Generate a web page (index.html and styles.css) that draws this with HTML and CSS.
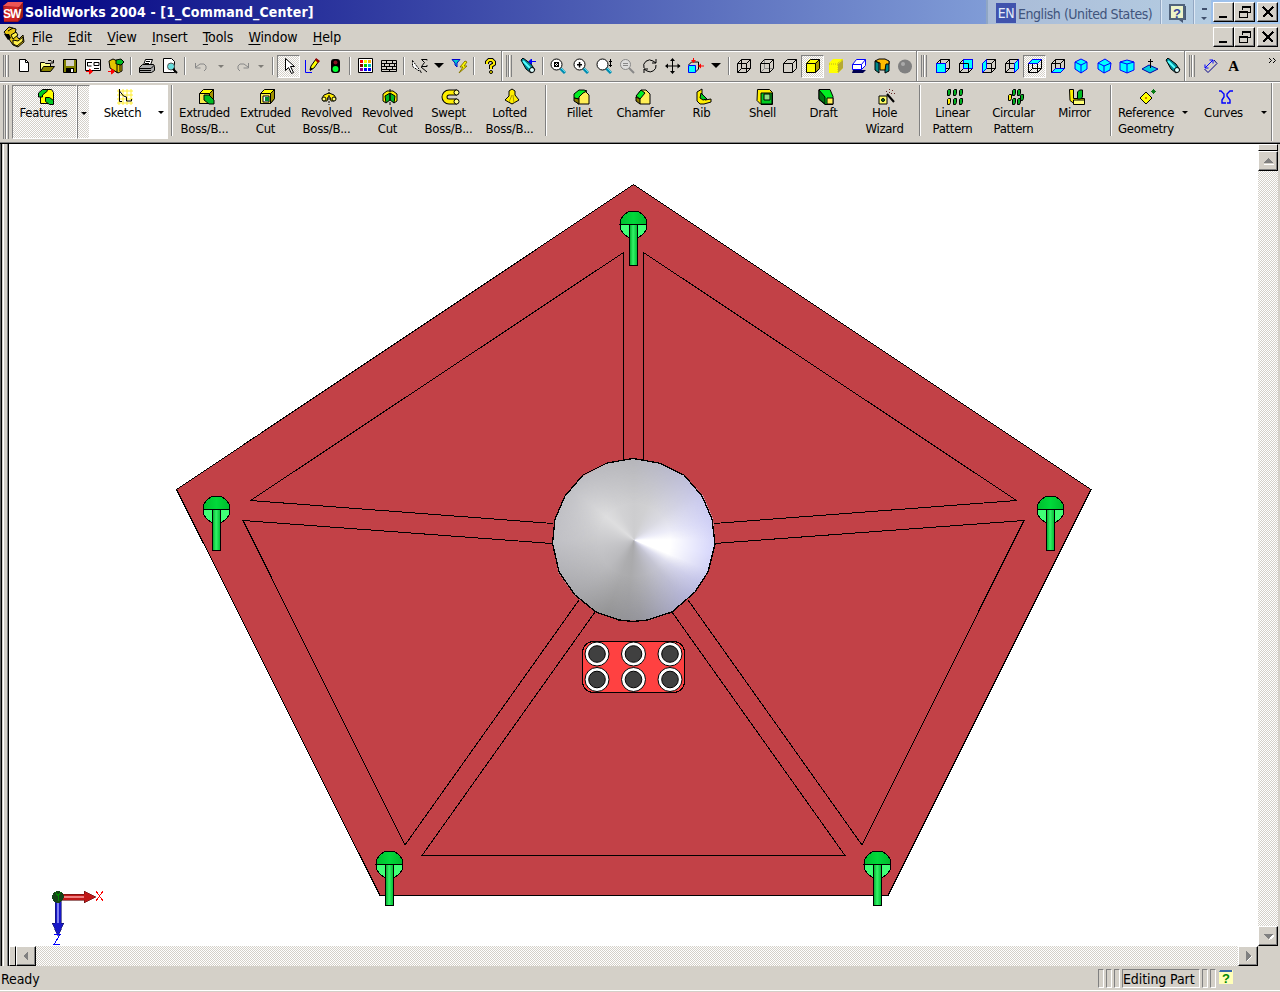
FILE: index.html
```html
<!DOCTYPE html>
<html lang="en">
<head>
<meta charset="utf-8">
<title>SolidWorks 2004 - [1_Command_Center]</title>
<link rel="stylesheet" href="styles.css">
</head>
<body>
<svg class="defs" width="0" height="0">
<defs>
<linearGradient id="domeg" x1="0" x2="1"><stop offset="0" stop-color="#00bd2e"/><stop offset=".5" stop-color="#00d93a"/><stop offset="1" stop-color="#00b82c"/></linearGradient>
<linearGradient id="stemg" x1="0" x2="1"><stop offset="0" stop-color="#00a828"/><stop offset=".45" stop-color="#32f468"/><stop offset="1" stop-color="#00b830"/></linearGradient>
<symbol id="cubewire" viewBox="0 0 16 16"><path class="ln" d="M1.500 5.500h9v9h-9zM5.500 1.500h9v9h-9zM1.500 5.500l4-4M10.500 5.500l4-4M10.500 14.500l4-4M1.500 14.500l4-4"/></symbol>
<symbol id="cubeout" viewBox="0 0 16 16"><path class="ln" d="M1.500 5.500h9v9h-9zM1.500 5.500l4-4h9v9l-4 4M10.500 5.500l4-4"/></symbol>
<symbol id="mag" viewBox="0 0 16 16"><path d="M10 10l5 5" stroke="#008bb0" stroke-width="3"/><path d="M11 10l4 4" stroke="#5de" /><circle cx="6.500" cy="6.500" r="5.500" fill="#fff" stroke="#000"/></symbol>
<symbol id="box" viewBox="0 0 16 16"><path class="ol" fill="#ff0" d="M.5 4.500l4-4h10v9l-4 5H.5z"/><path class="ol" fill="#f5ea4a" d="M.5 4.500h10v10H.5z"/><path d="M10.500 4.500l4-4v9l-4 5z" class="ol" fill="#a09000"/></symbol>
<symbol id="iso" viewBox="0 0 16 16"><path d="M8 1l6 3v7l-6 4-6-4V4z" fill="#0ff" stroke="#00f"/><path d="M2 4l6 3 6-3M8 7v8" fill="none" stroke="#00f"/></symbol>
<symbol id="drop" viewBox="0 0 16 16"><path d="M5 7h6L8 10z"/></symbol>
<symbol id="dropbig" viewBox="0 0 16 16"><path d="M3 5h10L8 10z"/></symbol>
<symbol id="pin" viewBox="0 0 30 58"><circle cx="15" cy="14.500" r="13.500" fill="#40ff76"/><path d="M1.500 14.500a13.500 13.500 0 0 1 27 0z" fill="url(#domeg)"/><circle cx="15" cy="14.500" r="13.500" class="ln"/><path d="M1.500 14.500h27" class="ln"/><rect x="11" y="14.500" width="8" height="41" fill="url(#stemg)" stroke="#000"/></symbol>
<symbol id="lamp" viewBox="0 0 26 26"><circle cx="13" cy="13" r="12" fill="#fff" stroke="#000"/><circle cx="13" cy="13" r="8.300" fill="#404040" stroke="#000"/></symbol>
<symbol id="flash" viewBox="0 0 16 16"><path d="M1 2l2-2 8 6 4 6-4 3-5-4z" class="ol" fill="#008b9a"/><path d="M3 3l7 7" stroke="#5ff" stroke-width="2"/><circle cx="12" cy="12" r="2.500" fill="#dff" stroke="#000"/></symbol>
</defs>
</svg>

<header class="titlebar">
  <svg class="app" viewBox="0 0 20 20"><path d="M0 4l5-4h15v15l-5 5H1z" fill="#9d1b1b"/><path d="M1 5h14v14H1z" fill="#c22"/><path d="M0 4l5-4h15l-4 5z" fill="#e55"/><text x="0" y="16" class="logo">SW</text></svg>
  <h1>SolidWorks 2004 - [1_Command_Center]</h1>
  <div class="lang"><b>EN</b><span>English (United States)</span><i></i>
    <svg class="help" viewBox="0 0 20 20"><path d="M3 2h15v14h-3v3l-4-3H3z" fill="#475875"/><path d="M2 1h14v14H2z" fill="#edf3c8" stroke="#50627b" stroke-width="2"/><text x="5" y="14" class="qb">?</text></svg><i></i>
    <svg class="mini" viewBox="0 0 8 20"><path d="M2 6h5v2H2zM1 15h6l-3 3z" fill="#40506c"/></svg></div>
  <div class="wins">
    <button><svg viewBox="0 0 16 16"><path d="M3 12h8v2H3z"/></svg></button><button><svg viewBox="0 0 16 16"><path class="ln" d="M5.500 5.500v-3h8v6h-3M2.500 7.500h8v6h-8z"/><path d="M5 2h9v2H5zM2 7h9v2H2z"/></svg></button><button class="x"><svg viewBox="0 0 16 16"><path d="M3 3l10 10M13 3L3 13" stroke="#000" stroke-width="2"/></svg></button>
  </div>
</header>

<nav class="menubar">
  <svg class="part" viewBox="0 0 22 22"><path class="ol" fill="#e6c413" d="M1 6l5-5 7 2-1 5 4 5 4-4 1 7-6 5-5-2-4-6z"/><path class="ol" fill="#fff04a" d="M5 5l5-3M8 9l5-3 2 3-5 4zM10 14l5 1 5-4v4l-6 5-4-2z"/><path d="M1 8l4 6 3-2-2-4z"/></svg>
  <a><u>F</u>ile</a><a><u>E</u>dit</a><a><u>V</u>iew</a><a><u>I</u>nsert</a><a><u>T</u>ools</a><a><u>W</u>indow</a><a><u>H</u>elp</a>
  <div class="wins">
    <button><svg viewBox="0 0 16 16"><path d="M3 12h8v2H3z"/></svg></button><button><svg viewBox="0 0 16 16"><path class="ln" d="M5.500 5.500v-3h8v6h-3M2.500 7.500h8v6h-8z"/><path d="M5 2h9v2H5zM2 7h9v2H2z"/></svg></button><button class="x"><svg viewBox="0 0 16 16"><path d="M3 3l10 10M13 3L3 13" stroke="#000" stroke-width="2"/></svg></button>
  </div>
</nav>

<div class="tools">
  <span class="grip"></span>
  <span class="t"><svg viewBox="0 0 16 16"><path class="ol" fill="#fff" d="M3.500 1.500h6l3 3v9h-9z"/><path class="ln" d="M9.500 1.500v3h3"/></svg></span>
  <span class="t"><svg viewBox="0 0 16 16"><path class="ol" fill="#ff8" d="M1.500 13.500v-9h4l1 1h5v3"/><path class="ol" fill="#8b8400" d="M1.500 13.500l3-5h11l-4 5z"/><path class="ln" d="M9 2.500h3l2 2M14.500 2v3h-3"/></svg></span>
  <span class="t"><svg viewBox="0 0 16 16"><path class="ol" fill="#808000" d="M1.500 1.500h13v13h-13z"/><path d="M4 2h8v6H4z" fill="#d4d0c8"/><path d="M4 10h8v5H4z"/><path d="M9 11h2v3H9z" fill="#fff"/></svg></span>
  <span class="t"><svg viewBox="0 0 16 16"><path class="ol" fill="#fff" d="M.5 1.500h15v11H.5z"/><path class="ln" d="M2 4.500h5M2.500 4v4h4M9 4.500h5v3H9zM9 10.500h5"/><path d="M1 13.500h5M4.500 11v5l3-2.500z" fill="red" stroke="red"/></svg></span>
  <span class="t"><svg viewBox="0 0 16 16"><path class="ol" fill="#e4c500" d="M1 3l4-2 9 4v8l-4 2-8-5z"/><path class="ol" fill="#0b2" d="M8 2l5-1 3 3-3 3-5-1z"/><path class="ln" d="M9 7v8M12 7v6"/><path d="M0 13.500h5M3.500 11v5l3-2.500z" fill="red" stroke="red"/></svg></span>
  <i class="sep"></i>
  <span class="t"><svg viewBox="0 0 16 16"><path class="ol" fill="#fff" d="M4.500 7l2-5.500h7L11.500 7z"/><path class="ol" fill="#aaa" d="M.5 9.500l3-3h11l1 2v4l-3 2H.5z"/><path class="ln" d="M1 10.500h11l3-3M1 12.500h11M7 3.500h4M6 5.500h4"/></svg></span>
  <span class="t"><svg viewBox="0 0 16 16"><path class="ol" fill="#fff" d="M1.500.5h8l3 3v11h-11z"/><circle cx="9" cy="8.500" r="3.500" fill="#6dd" stroke="#555"/><path d="M11 11l4 4" stroke="#000" stroke-width="2"/></svg></span>
  <i class="sep"></i>
  <span class="t"><svg viewBox="0 0 16 16"><path fill="none" stroke="#888" d="M2.500 5v5h5M3 9l4-3h4l2 2v3l-2 2"/></svg></span>
  <span class="t w18 dim"><svg><use href="#drop"/></svg></span>
  <span class="t"><svg viewBox="0 0 16 16"><path fill="none" stroke="#888" d="M14.500 5v5h-5M14 9l-4-3H6L4 8v3l2 2"/></svg></span>
  <span class="t w16 dim"><svg><use href="#drop"/></svg></span>
  <i class="sep"></i>
  <span class="t on"><svg viewBox="0 0 16 16"><path class="ol" fill="#fff" d="M4.500.5v12l3-3 3 6 2-1-3-6h4z"/></svg></span>
  <span class="t"><svg viewBox="0 0 16 16"><path d="M1.500 2v12.500H8" fill="none" stroke="#00f"/><path class="ol" fill="#ff0" d="M6 12l1-4 5-7 3 2-5 7z"/><path d="M12 0l4 3-2 2-3-3z" fill="#900"/><path d="M6 13V9l3 2z"/></svg></span>
  <span class="t"><svg viewBox="0 0 16 16"><rect x="4" y="1" width="9" height="14" rx="3"/><circle cx="8.500" cy="4.500" r="2" fill="#812"/><circle cx="8.500" cy="11" r="3" fill="#0f3"/></svg></span>
  <i class="sep"></i>
  <span class="t"><svg viewBox="0 0 16 16"><path d="M.5.500h14v14H.5z" class="ol" fill="#fff"/><path fill="red" d="M2 2h3v3H2z"/><path fill="#800" d="M2 6h3v3H2z"/><path fill="#808" d="M2 10h3v3H2z"/><path fill="#ff0" d="M6 2h3v3H6z"/><path fill="#0c0" d="M6 6h3v3H6z"/><path fill="#00f" d="M6 10h3v3H6zM10 10h3v3h-3z"/><path fill="#fa0" d="M10 2h3v3h-3z"/><path fill="#0bb" d="M10 6h3v3h-3z"/></svg></span>
  <span class="t"><svg viewBox="0 0 16 16"><path class="ln" d="M.5 2.500h15v11H.5zM1 5.500h14M1 8.500h14M1 11.500h14M5.500 3v2M11.500 3v2M8.500 6v2M3.500 6v2M13.500 6v2M5.500 9v2M11.500 9v2M8.500 12v2"/></svg></span>
  <i class="sep"></i>
  <span class="t"><svg viewBox="0 0 16 16"><path d="M.5 2.500v6l9 6z" fill="#fff" stroke="#000" stroke-dasharray="2 1"/><path class="ln" d="M15 2.500V1.500H9.500l3 3-3 4H15V7M9 9l6 5"/></svg></span>
  <span class="t w16"><svg><use href="#dropbig"/></svg></span>
  <span class="t"><svg viewBox="0 0 16 16"><path d="M1 1.500h8L6 5v4L4 7V5z" fill="#0cc" stroke="#00c"/><path d="M14 3l-5 6h3l-4 6 8-7h-3l3-4z" fill="#ff0" stroke="#887700"/></svg></span>
  <i class="sep"></i>
  <span class="t"><svg viewBox="0 0 16 16"><path d="M5 6V4l2-2h3l2 2v2L9 8v3" fill="none" stroke="#000" stroke-width="4"/><path d="M5 6V4l2-2h3l2 2v2L9 8v3" fill="none" stroke="#fe0" stroke-width="2"/><circle cx="9" cy="14" r="1.500" fill="#fe0" stroke="#000"/></svg></span>
  <i class="end"></i><span class="grip"></span>
  <span class="t"><svg viewBox="0 0 16 16"><use href="#flash"/><path d="M9 3.500h7M11.500 1v5L9 3.500z" stroke="#00f" fill="#00f"/></svg></span>
  <i class="sep s7"></i>
  <span class="t"><svg viewBox="0 0 16 16"><use href="#mag"/><path class="ln" d="M4.500 4.500h4v4h-4zM4 4l5 5M9 4L4 9"/></svg></span>
  <span class="t"><svg viewBox="0 0 16 16"><use href="#mag"/><path d="M4 6h5v1.500H4zM5.800 4h1.500v5.500H5.800z"/></svg></span>
  <span class="t"><svg viewBox="0 0 16 16"><use href="#mag"/><path class="ln" d="M14.500 1v8M13 3.500h3M13 7.500h3"/></svg></span>
  <span class="t"><svg viewBox="0 0 16 16"><path d="M10 10l5 5" stroke="#888" stroke-width="2"/><circle cx="6.500" cy="6.500" r="5" fill="#ddd" stroke="#888"/><path d="M4 5.500h5M4 7.500h5" stroke="#888"/></svg></span>
  <span class="t"><svg viewBox="0 0 16 16"><path class="ln" d="M2 10a6 6 0 0 1 9-7l3 2M14 1v4h-4M14 7a6 6 0 0 1-9 6l-3-2M2 15v-4h4"/></svg></span>
  <span class="t"><svg viewBox="0 0 16 16"><path d="M7.500 1v14M1 8h14" stroke="#000"/><path d="M7.500 0L10 3H5zM7.500 16L10 13H5zM0 8l3-2.500v5zM15.500 8l-3-2.500v5z"/></svg></span>
  <span class="t"><svg viewBox="0 0 16 16"><path class="ln" d="M.5 7l3-3h7v7l-3 3"/><path d="M.5 7.500h7v7h-7z" fill="#0ff" stroke="#00f"/><path d="M5.500 0v4M16 8h-4" stroke="red"/><path d="M3 2h5L5.500 5zM13 5.500v5L10 8z" fill="red"/></svg></span>
  <span class="t w18"><svg><use href="#dropbig"/></svg></span>
  <i class="sep s7"></i>
  <span class="t"><svg><use href="#cubewire"/></svg></span>
  <span class="t"><svg viewBox="0 0 16 16"><path d="M1.500 14.500l4-4h9M5.500 1.500v9" stroke="#888" fill="none"/><use href="#cubeout"/></svg></span>
  <span class="t"><svg><use href="#cubeout"/></svg></span>
  <span class="t on"><svg viewBox="0 0 16 16"><path d="M1 5l4-4h10v9l-5 5H1z" fill="#ff0"/><path d="M10 5l5-4v9l-5 5z" fill="#aa9a00"/><use href="#cubeout"/></svg></span>
  <span class="t"><svg viewBox="0 0 16 16"><path d="M1 5l4-4h10v9l-5 5H1z" fill="#ff0"/><path d="M1 6h9v9M10 5l5-4" fill="none" stroke="#c0b020" stroke-dasharray="1 1"/><path d="M10 6l5-4v8l-5 5z" fill="#b5a933"/></svg></span>
  <span class="t"><svg viewBox="0 0 16 16"><path d="M2 12h13l-3 3H1z" fill="#000050"/><path d="M1.500 6.500l4-5h9v6l-4 4h-9zM1.500 6.500h9v5M10.500 6.500l4-5" fill="#fff" stroke="#00f"/></svg></span>
  <span class="t"><svg viewBox="0 0 16 16"><path class="ol" fill="#088" d="M1 3l4 2v10l-4-3zM15 3l-4 2v10l4-2z"/><path class="ol" fill="#fb0" d="M1 3l4-2h6l4 2v3h-3l-1 6H6V5z"/></svg></span>
  <span class="t"><svg viewBox="0 0 16 16"><circle cx="8" cy="8.500" r="7" fill="#808080"/><circle cx="6" cy="6" r="2" fill="#aaa"/></svg></span>
  <i class="end"></i><span class="grip"></span>
  <span class="t"><svg viewBox="0 0 16 16"><use href="#cubewire"/><path d="M1.500 5.500h9v9h-9z" fill="#0ff" stroke="#00f"/></svg></span>
  <span class="t"><svg viewBox="0 0 16 16"><use href="#cubewire"/><path d="M5.500 1.500h9v9h-9z" fill="#0ff" stroke="#00f"/><path class="ln" d="M1.500 5.500h9v9"/></svg></span>
  <span class="t"><svg viewBox="0 0 16 16"><use href="#cubewire"/><path d="M1.500 5.500l4-4v9l-4 4z" fill="#0ff" stroke="#00f"/></svg></span>
  <span class="t"><svg viewBox="0 0 16 16"><use href="#cubewire"/><path d="M10.500 5.500l4-4v9l-4 4z" fill="#0ff" stroke="#00f"/></svg></span>
  <span class="t on"><svg viewBox="0 0 16 16"><use href="#cubewire"/><path d="M1.500 5.500l4-4h9l-4 4z" fill="#0ff" stroke="#00f"/></svg></span>
  <span class="t"><svg viewBox="0 0 16 16"><use href="#cubewire"/><path d="M1.500 14.500l4-4h9l-4 4z" fill="#0ff" stroke="#00f"/></svg></span>
  <span class="t"><svg><use href="#iso"/></svg></span>
  <span class="t"><svg viewBox="0 0 16 16"><path d="M9 1l6 4-1 7-6 3-6-4V5z" fill="#0ff" stroke="#00f"/><path d="M2 5l6 3 7-3M8 8v7" fill="none" stroke="#00f"/></svg></span>
  <span class="t"><svg viewBox="0 0 16 16"><path d="M1 4l7-2 7 2v8l-7 3-7-3z" fill="#0ff" stroke="#00f"/><path d="M1 4l7 2 7-2M8 6v9" fill="none" stroke="#00f"/></svg></span>
  <span class="t"><svg viewBox="0 0 16 16"><path d="M0 11l7-4 9 4-8 4z" fill="#0cd" stroke="#00a"/><path class="ln" d="M8.500 1v9M6 3.500h5"/></svg></span>
  <span class="t"><svg><use href="#flash"/></svg></span>
  <i class="end"></i><span class="grip"></span>
  <span class="t"><svg viewBox="0 0 16 16"><path d="M5 14.500L1.500 11M5 14.500l9-9L11 2" fill="none" stroke="#00008b"/><path d="M2 10l8-8M2 6.500v3.500h3.500M6.500 2H10v3.500" fill="none" stroke="#00f"/></svg></span>
  <span class="t serif">A</span>
  <span class="more"><svg viewBox="0 0 9 7"><path class="ln" d="M1 1l2.500 2.500L1 6M5 1l2.500 2.500L5 6"/></svg></span>
</div>

<div class="ribbon">
  <span class="grip"></span>
  <div class="cm feat"><svg viewBox="0 0 16 16"><path class="ol" fill="#ff0" d="M2.500 4.500l3-4h8l2 3v9l-3 2h-10z"/><path class="ol" fill="#0c2" d="M.5 8V4l4-3.500h4l1 1.500-5 4v2z"/><path class="ol" fill="#0c2" d="M7.500 8.500h4l4 3v4h-4l-4-3z"/></svg><span>Features</span></div>
  <div class="ar feat2"><svg><use href="#drop"/></svg></div>
  <div class="cm sk"><svg viewBox="0 0 16 16"><path d="M0 2h16M0 6h16M0 10h16M0 14h16M2 0v16M6 0v16M10 0v16M14 0v16" stroke="#fe3"/><path class="ln" d="M2.500 0v12.500H5M2.500 2l4 5 3 1v4h5V10"/></svg><span>Sketch</span></div>
  <div class="ar sk2"><svg><use href="#drop"/></svg></div>
  <i class="bar b1"></i>
  <div class="cm"><svg viewBox="0 0 16 16"><use href="#box"/><path class="ol" fill="#0b2" d="M5 6h5l5 5v4h-5l-5-4z"/></svg><span>Extruded<br>Boss/B...</span></div>
  <div class="cm"><svg viewBox="0 0 16 16"><use href="#box"/><path class="ol" fill="#fff" d="M3 7h6v6H3z"/><path d="M5 8h4v4H5z" fill="#083"/></svg><span>Extruded<br>Cut</span></div>
  <div class="cm"><svg viewBox="0 0 16 16"><path class="ol" fill="#fe0" d="M1 9l2-3 5-2 5 2 2 3-2 3h-3L9 8H7l-1 4H2z"/><circle cx="3" cy="10" r="2" class="ol" fill="#ff7"/><circle cx="13" cy="10" r="2" class="ol" fill="#ff7"/><path class="ln" d="M8 0v16" stroke-dasharray="2 1"/></svg><span>Revolved<br>Boss/B...</span></div>
  <div class="cm"><svg viewBox="0 0 16 16"><path class="ol" fill="#fe0" d="M1 5l4-3h6l4 3v7l-3 2-4-4-4 4-3-2z"/><path fill="#0b2" class="ol" d="M3 7l5-3v7l-4 3zM13 7L8 4v7l4 3z"/><path class="ln" d="M8 0v3M8 13v3"/></svg><span>Revolved<br>Cut</span></div>
  <div class="cm"><svg viewBox="0 0 16 16"><path d="M14 3.500H6a4 4 0 0 0 0 9h8" fill="none" stroke="#000" stroke-width="6"/><path d="M14 3.500H6a4 4 0 0 0 0 9h8" fill="none" stroke="#fe0" stroke-width="4"/><circle cx="13.500" cy="3.500" r="2.500" class="ol" fill="#ff8"/><circle cx="13.500" cy="12.500" r="2.500" class="ol" fill="#ff8"/></svg><span>Swept<br>Boss/B...</span></div>
  <div class="cm"><svg viewBox="0 0 16 16"><path class="ol" fill="#fe0" d="M5 2l3-2 3 2v4l4 5-7 4-7-4 4-4z"/><path d="M8 6l-3 7M9 6l1 8" stroke="#a90"/></svg><span>Lofted<br>Boss/B...</span></div>
  <i class="bar b2"></i>
  <div class="cm"><svg viewBox="0 0 16 16"><path class="ol" fill="#fe5" d="M1 8l4-6h6l4 4v9H4z"/><path class="ol" fill="#0e2" d="M0 9V5l5-4h5l3 1-4 2-4 4v2z"/><path class="ol" fill="#877800" d="M0 9l5 1v5l-5-3z"/></svg><span>Fillet</span></div>
  <div class="cm"><svg viewBox="0 0 16 16"><path class="ol" fill="#fe5" d="M1 8l5-7h5l4 4v10H5z"/><path class="ol" fill="#0e2" d="M1 7l5-6 4 3-5 6z"/><path class="ol" fill="#877800" d="M1 8l4 2v5l-4-3z"/></svg><span>Chamfer</span></div>
  <div class="cm"><svg viewBox="0 0 16 16"><path class="ol" fill="#fe0" d="M1 3l5-3v8l3 3 6-1v3l-7 2H4l-3-3z"/><path class="ol" fill="#0c2" d="M5 4l6 6-4 1-3-2z"/></svg><span>Rib</span></div>
  <div class="cm"><svg viewBox="0 0 16 16"><path class="ol" fill="#fe0" d="M.5.500h12l3 3v12H4l-4-4z"/><path class="ol" fill="#0c2" d="M4 4h11v11H4z"/><path class="ol" fill="#8fdd83" d="M7 5h6v6H7z"/></svg><span>Shell</span></div>
  <div class="cm"><svg viewBox="0 0 16 16"><path class="ol" fill="#0e2" d="M1 .5h11l3 7v8H7l-6-5z"/><path class="ol" fill="#071" d="M1 1l6 7v7l-6-5z"/><path class="ol" fill="#fe5" d="M9 9h6v6H9z"/></svg><span>Draft</span></div>
  <div class="cm"><svg viewBox="0 0 16 16"><path class="ol" fill="#ff6" d="M0 7h8v8H0z"/><circle cx="4" cy="11" r="1.500" class="ol" fill="#083"/><path d="M8 5l7 8" stroke="#000" stroke-width="2"/><path d="M7 2h1v1H7zM10 0h1v1h-1zM13 1h1v1h-1zM15 4h1v1h-1zM12 4h1v1h-1zM10 3h1v1h-1z" fill="#622"/></svg><span>Hole<br>Wizard</span></div>
  <i class="bar b3"></i>
  <div class="cm"><svg viewBox="0 0 16 16"><path class="ol" fill="#00b020" d="M.5 1.500l1-1h2v4l-1 2h-2zM6.500 1.500l1-1h2v4l-1 2h-2zM12.500 1.500l1-1h2v4l-1 2h-2zM6.500 10.500l1-1h2v4l-1 2h-2zM12.500 10.500l1-1h2v4l-1 2h-2z"/><path class="ol" fill="#fe0" d="M.5 10.500l1-1h2v4l-1 2h-2z"/></svg><span>Linear<br>Pattern</span></div>
  <div class="cm"><svg viewBox="0 0 16 16"><path class="ol" fill="#00b020" d="M4.500 1.500l1-1h2v4l-1 2h-2zM9.500 1.500l1-1h2v4l-1 2h-2zM12.500 6.500l1-1h2v4l-1 2h-2zM9.500 10.500l1-1h2v4l-1 2h-2zM4.500 10.500l1-1h2v4l-1 2h-2z"/><path class="ol" fill="#fe0" d="M.5 6.500l1-1h2v4l-1 2h-2z"/></svg><span>Circular<br>Pattern</span></div>
  <div class="cm"><svg viewBox="0 0 16 16"><path class="ol" fill="#fe0" d="M.5.500h4v9h11v5H5l-4-3z"/><path class="ol" fill="#0b2" d="M8.500 3l2-2h3v7l-2 2h-3z"/><path class="ol" fill="#ff7" d="M4.500 11h11v4.500h-11z"/></svg><span>Mirror</span></div>
  <i class="bar b4"></i>
  <div class="cm ref"><svg viewBox="0 0 16 16"><path class="ol" fill="#ff0" d="M0 9l6-6 6 6-6 6z"/><path d="M5 9h2" stroke="#900"/><path d="M13.500 0v5M11 2.500h5M12 1l3 3M15 1l-3 3" stroke="#087b17"/></svg><span>Reference<br>Geometry</span></div>
  <div class="ar"><svg><use href="#drop"/></svg></div>
  <div class="cm cur"><svg viewBox="0 0 16 16"><path d="M1 2h2l3 3v3l-2 3v3h4M15 2h-3l-3 3v2l3 4v3H9" fill="none" stroke="#00f" stroke-width="1.400"/></svg><span>Curves</span></div>
  <div class="ar"><svg><use href="#drop"/></svg></div>
  <i class="end last"></i>
</div>

<main class="work">
  <aside class="split"></aside>
  <svg class="view" viewBox="9 144 1249 802">
    <path class="ol" fill="#c24147" d="M633.500 184.500L1091 489.500 888 895.500H380L176.500 489.500z"/>
    <path class="ln" d="M623.500 462V252.500L250.500 500.500 553 523.500M643.500 462V252.500L1016.500 500.500 714 523.500M714 543.500L1024 520.500 862 845 688 600M552 543.500L243 520.500 405 845 579 600M595 612L422 855.500H845L672 612"/>
    <foreignObject x="552" y="458" width="164" height="164"><div class="cone"></div></foreignObject>
    <path class="ln rim" d="M633 458.500L659 463 684 475 702 496 712 519 715 544 708 572 695 592 672 612 648 620 633 621.500 619 620 596 612 575 595 559 572 552.500 543 555 519 565 496 583 475 607 463z"/>
    <rect class="ol" x="582.500" y="641.500" width="102" height="51" rx="11" fill="#ff4141"/>
    <g class="smooth">
    <use href="#lamp" x="584" y="641" width="26" height="26"/><use href="#lamp" x="620.500" y="641" width="26" height="26"/><use href="#lamp" x="657" y="641" width="26" height="26"/>
    <use href="#lamp" x="584" y="666.500" width="26" height="26"/><use href="#lamp" x="620.500" y="666.500" width="26" height="26"/><use href="#lamp" x="657" y="666.500" width="26" height="26"/>
    </g>
    <use href="#pin" x="618.500" y="210" width="30" height="58"/><use href="#pin" x="201.500" y="495" width="30" height="58"/><use href="#pin" x="1035.500" y="495" width="30" height="58"/><use href="#pin" x="374.500" y="850" width="30" height="58"/><use href="#pin" x="862.500" y="850" width="30" height="58"/>
    <path d="M60 894h24v-3l12 6-12 6v-3H60z" fill="#c01818" stroke="#601010" stroke-width=".6"/><path d="M63 897h21" stroke="#f08080" stroke-width="2"/>
    <path d="M55 900v23h-3l6 13 6-13h-3v-23z" fill="#1818c8" stroke="#101060" stroke-width=".6"/><path d="M58 903v20" stroke="#8080f0" stroke-width="2"/>
    <circle cx="58" cy="897" r="5.800" fill="#154318"/><path d="M55.500 892l2.500 4 2.500-4M58 896v5" fill="none" stroke="#080"/>
    <path d="M96 891l7 10M103 891l-7 10" stroke="#f00"/><path d="M54 934.500h6l-6 10h6" fill="none" stroke="#00f"/>
  </svg>
  <div class="vs"><b class="nub"></b><button><svg viewBox="0 0 16 16"><path d="M4 11h10l-1 1H4z" fill="#fff"/><path d="M3 10h10L8 5z" fill="#808080"/></svg></button><span></span><button><svg viewBox="0 0 16 16"><path d="M13 7l-4 5 5-4z" fill="#fff" stroke="#fff"/><path d="M3 6h10l-5 5z" fill="#808080"/></svg></button></div>
  <div class="hs"><b class="nub"></b><button><svg viewBox="0 0 16 16"><path d="M10 3v10L5 8z" fill="#808080"/></svg></button><span></span><button><svg viewBox="0 0 16 16"><path d="M6 13l5-5" stroke="#fff" stroke-width="2"/><path d="M6 3v10l5-5z" fill="#808080"/></svg></button></div>
</main>

<footer class="status"><span class="ready">Ready</span><i></i><i></i><i></i><span class="mode">Editing Part</span><i></i><i></i><svg class="tip" viewBox="0 0 14 14"><path d="M0 0h14v14H0z" fill="#ffffb8"/><path d="M1 0h12v2H0z" fill="#3568a8"/><text x="3" y="12.500" class="tq">?</text></svg></footer>
</body>
</html>
```
FILE: styles.css
```css
* { box-sizing: border-box; }
body { margin: 0; width: 1280px; height: 992px; overflow: hidden; display: flex; flex-direction: column; background: #d4d0c8; color: #000; font: 13px/16px "DejaVu Sans Condensed", "DejaVu Sans", sans-serif; font-stretch: condensed; letter-spacing: -.3px; }
svg { display: block; flex: none; }
.defs { position: absolute; }
.ln { fill: none; stroke: #000; }
.ol { stroke: #000; }
button { padding: 0; margin: 0; border: 1px solid; border-color: #fff #000 #000 #fff; background: #d4d0c8; box-shadow: inset -1px -1px #808080; display: flex; align-items: center; justify-content: center; }
button svg { width: 16px; height: 16px; shape-rendering: crispEdges; }

.titlebar { height: 24px; flex: none; display: flex; background: linear-gradient(90deg, #000080, #a6caf0); padding-left: 3px; }
.app { width: 20px; height: 20px; margin: 2px 2px 0 0; }
.logo { font: bold 12px "Liberation Sans", sans-serif; fill: #fff; letter-spacing: -1px; }
h1 { margin: 0; flex: 1; color: #fff; font: bold 14px/24px "DejaVu Sans Condensed", "DejaVu Sans", sans-serif; font-stretch: condensed; letter-spacing: .13px; white-space: nowrap; }
.lang { width: 225px; margin-right: 2px; display: flex; align-items: center; border-left: 2px solid #8fa6c4; background: linear-gradient(90deg, #a9bbd7, #b5cde2); color: #40547c; padding-left: 8px; white-space: nowrap; font-size: 14px; letter-spacing: -.45px; }
.lang b { width: 20px; height: 20px; background: #4053ad; color: #e4ebf8; font-weight: normal; line-height: 20px; text-align: center; margin-top: 2px; }
.lang span { width: 138px; padding: 3px 0 0 2px; }
.lang span + i { margin-left: 6px; }
.lang i { width: 2px; height: 24px; background: #93a7c2; border-right: 1px solid #dce8f5; }
.help { width: 20px; height: 20px; margin: 3px 5px 0 6px; }
.qb { font: bold 13px "Liberation Sans", sans-serif; fill: #35459d; }
.mini { width: 8px; height: 20px; margin-left: 5px; }
.wins { display: flex; width: 67px; height: 20px; margin-top: 2px; flex: none; }
.wins button { width: 21px; height: 20px; }
.wins .x { margin-left: 2px; }

.menubar { height: 26px; flex: none; display: flex; padding-left: 3px; font-size: 14px; letter-spacing: -.1px; }
.part { width: 22px; height: 22px; margin: 2px 7px 0 0; }
.menubar a { line-height: 26px; margin-right: 15.300px; }
.menubar a u { text-underline-offset: 2px; }
.menubar .wins { margin: 3px 0 0 auto; }

.tools { height: 32px; flex: none; display: flex; align-items: center; border-top: 1px solid #808080; border-bottom: 1px solid #808080; box-shadow: inset 0 1px #fff; padding-left: 3px; }
.grip { width: 6px; height: 22px; margin-right: 3px; flex: none; border: solid; border-width: 0 1px; border-color: #fff #808080; background: linear-gradient(90deg, #d4d0c8 1px, #808080 1px 2px, #fff 2px 3px, #d4d0c8 3px); }
.end + .grip { margin: 0 4px 0 2px; }
.t { width: 23px; height: 23px; flex: none; display: flex; align-items: center; justify-content: center; }
.t svg { width: 16px; height: 16px; }
.t > svg, .cm > svg { overflow: visible; }
.on, .feat, .feat2 { background: repeating-conic-gradient(#fff 0 25%, #d4d0c8 0 50%) 0 0 / 2px 2px; border: 1px solid; border-color: #808080 #fff #fff #808080; }
.w18 { width: 18px; }
.w16 { width: 16px; }
.dim { opacity: .4; }
.sep { width: 8px; height: 18px; flex: none; background: linear-gradient(90deg, transparent 3px, #808080 3px 4px, #fff 4px 5px, transparent 5px); }
.s7 { width: 7px; }
.end { width: 3px; height: 30px; flex: none; border-left: 1px solid #808080; background: linear-gradient(90deg, #fff 1px, transparent 1px); }
.serif { font: bold 15px "Liberation Serif", serif; }
.more { align-self: flex-start; margin: 6px 3px 0 auto; }
.more svg { width: 9px; height: 7px; }

.ribbon { height: 59px; flex: none; display: flex; padding: 2px 0 2px 3px; border-top: 1px solid #fff; }
.ribbon .grip { height: 54px; }
.cm { width: 61px; height: 54px; flex: none; display: flex; flex-direction: column; align-items: center; padding-top: 4px; text-align: center; white-space: nowrap; }
.cm svg { width: 16px; height: 16px; margin: 0 0 0 2px; }
.cm span { margin-left: -2px; }
.feat { width: 65px; padding-top: 3px; }
.feat2.ar { width: 13px; }
.ar { width: 12px; height: 54px; display: flex; justify-content: center; padding-top: 19px; flex: none; }
.ar svg { width: 16px; height: 16px; flex: none; }
.sk { width: 64px; background: #fff; padding-left: 3px; }
.ar.sk2 { width: 14px; background: #fff; }
.bar { height: 51px; width: 2px; background: #808080; border-right: 1px solid #fff; flex: none; }
.b1 { margin: 0 2px 0 3px; }
.b2 { margin: 0 3px 0 4px; }
.b3 { margin: 0 2px 0 3px; }
.b4 { margin: 0 3px 0 4px; }
.ref { width: 64px; }
.cur { width: 67px; }
.last { height: 59px; margin: -2px 0 0 1px; }

.work { flex: none; height: 825px; display: grid; grid-template: 802px 20px / 9px 1249px 20px; border-top: 1px solid #d4d0c8; padding-top: 2px; background: linear-gradient(#808080 1px, #000 1px 2px, transparent 2px); }
.split { grid-row: 1 / 3; background: linear-gradient(90deg, #606060 1px, #000 1px 2px, #d4d0c8 2px 3px, #fff 3px 4px, #d4d0c8 4px 7px, #808080 7px 8px, #000 8px); }
.view { width: 1249px; height: 802px; background: #fff; shape-rendering: crispEdges; }
.smooth { shape-rendering: auto; }
.cone { width: 164px; height: 164px; clip-path: polygon(50% .5%, 66% 3%, 81% 11%, 92% 23%, 98% 37%, 99.500% 52%, 95% 70%, 87% 82%, 73% 94%, 59% 99%, 41% 99%, 27% 94%, 14% 84%, 4% 70%, .5% 52%, 2% 37%, 8% 23%, 19% 11%, 34% 3%);
  background: conic-gradient(from 0deg, #cdcdcf, #d0d0d2 20deg, #dadae2 50deg, #ececf8 75deg, #fff 90deg, #fff 112deg, #dedeee 124deg, #c5c5d3 140deg, #b4b4ba 165deg, #aaaaac 185deg, #adadaf 200deg, #bbbbbe 225deg, #c6c6c9 260deg, #d3d3d5 290deg, #dededf 310deg, #d2d2d4 335deg, #cdcdcf); }
/* Edge shading: lavender toward the light, darker grey on the far side */
.cone::after { content: ""; display: block; height: 164px; background: conic-gradient(#acacb2, #b0b0cc 30deg, #c0c0f0 60deg, #c6c6fa 100deg, #a8a8d4 140deg, #8c8c94 175deg, #888889 200deg, #a0a0a4 230deg, #bcbcc2 270deg, #acacb2); -webkit-mask: radial-gradient(circle closest-side, transparent 45%, rgba(0,0,0,.75) 100%); mask: radial-gradient(circle closest-side, transparent 45%, rgba(0,0,0,.75) 100%); }
.rim { stroke-width: 1.3; }
.vs, .hs { display: flex; }
.vs { flex-direction: column; }
.vs span, .hs span { flex: 1; background: repeating-conic-gradient(#fff 0 25%, #d4d0c8 0 50%) 0 0 / 2px 2px; }
.vs button { width: 20px; height: 20px; }
.vs .nub { height: 7px; border: 1px solid; border-color: #fff #000 #000 #fff; }
.hs { grid-column: 2; }
.hs button { width: 20px; height: 20px; }
.hs .nub { width: 7px; border: 1px solid; border-color: #fff #000 #000 #fff; }

.status { flex: 1; display: flex; border-bottom: 3px solid #d4d0c8; box-shadow: inset 0 -1px #fff; padding: 3px 47px 2px 1px; font-size: 14px; letter-spacing: -.1px; }
.ready { flex: 1; line-height: 20px; }
.status i { width: 6px; height: 19px; margin-right: 2px; border: 1px solid; border-color: #808080 #fff #fff #808080; }
.mode { width: 78px; height: 19px; border: 1px solid; border-color: #808080 #fff #fff #808080; line-height: 18px; margin-right: 2px; white-space: nowrap; }
.tip { width: 14px; height: 14px; margin: 1px 0 0 1px; }
.tq { font: bold 13px "Liberation Sans", sans-serif; fill: #080; }
```
